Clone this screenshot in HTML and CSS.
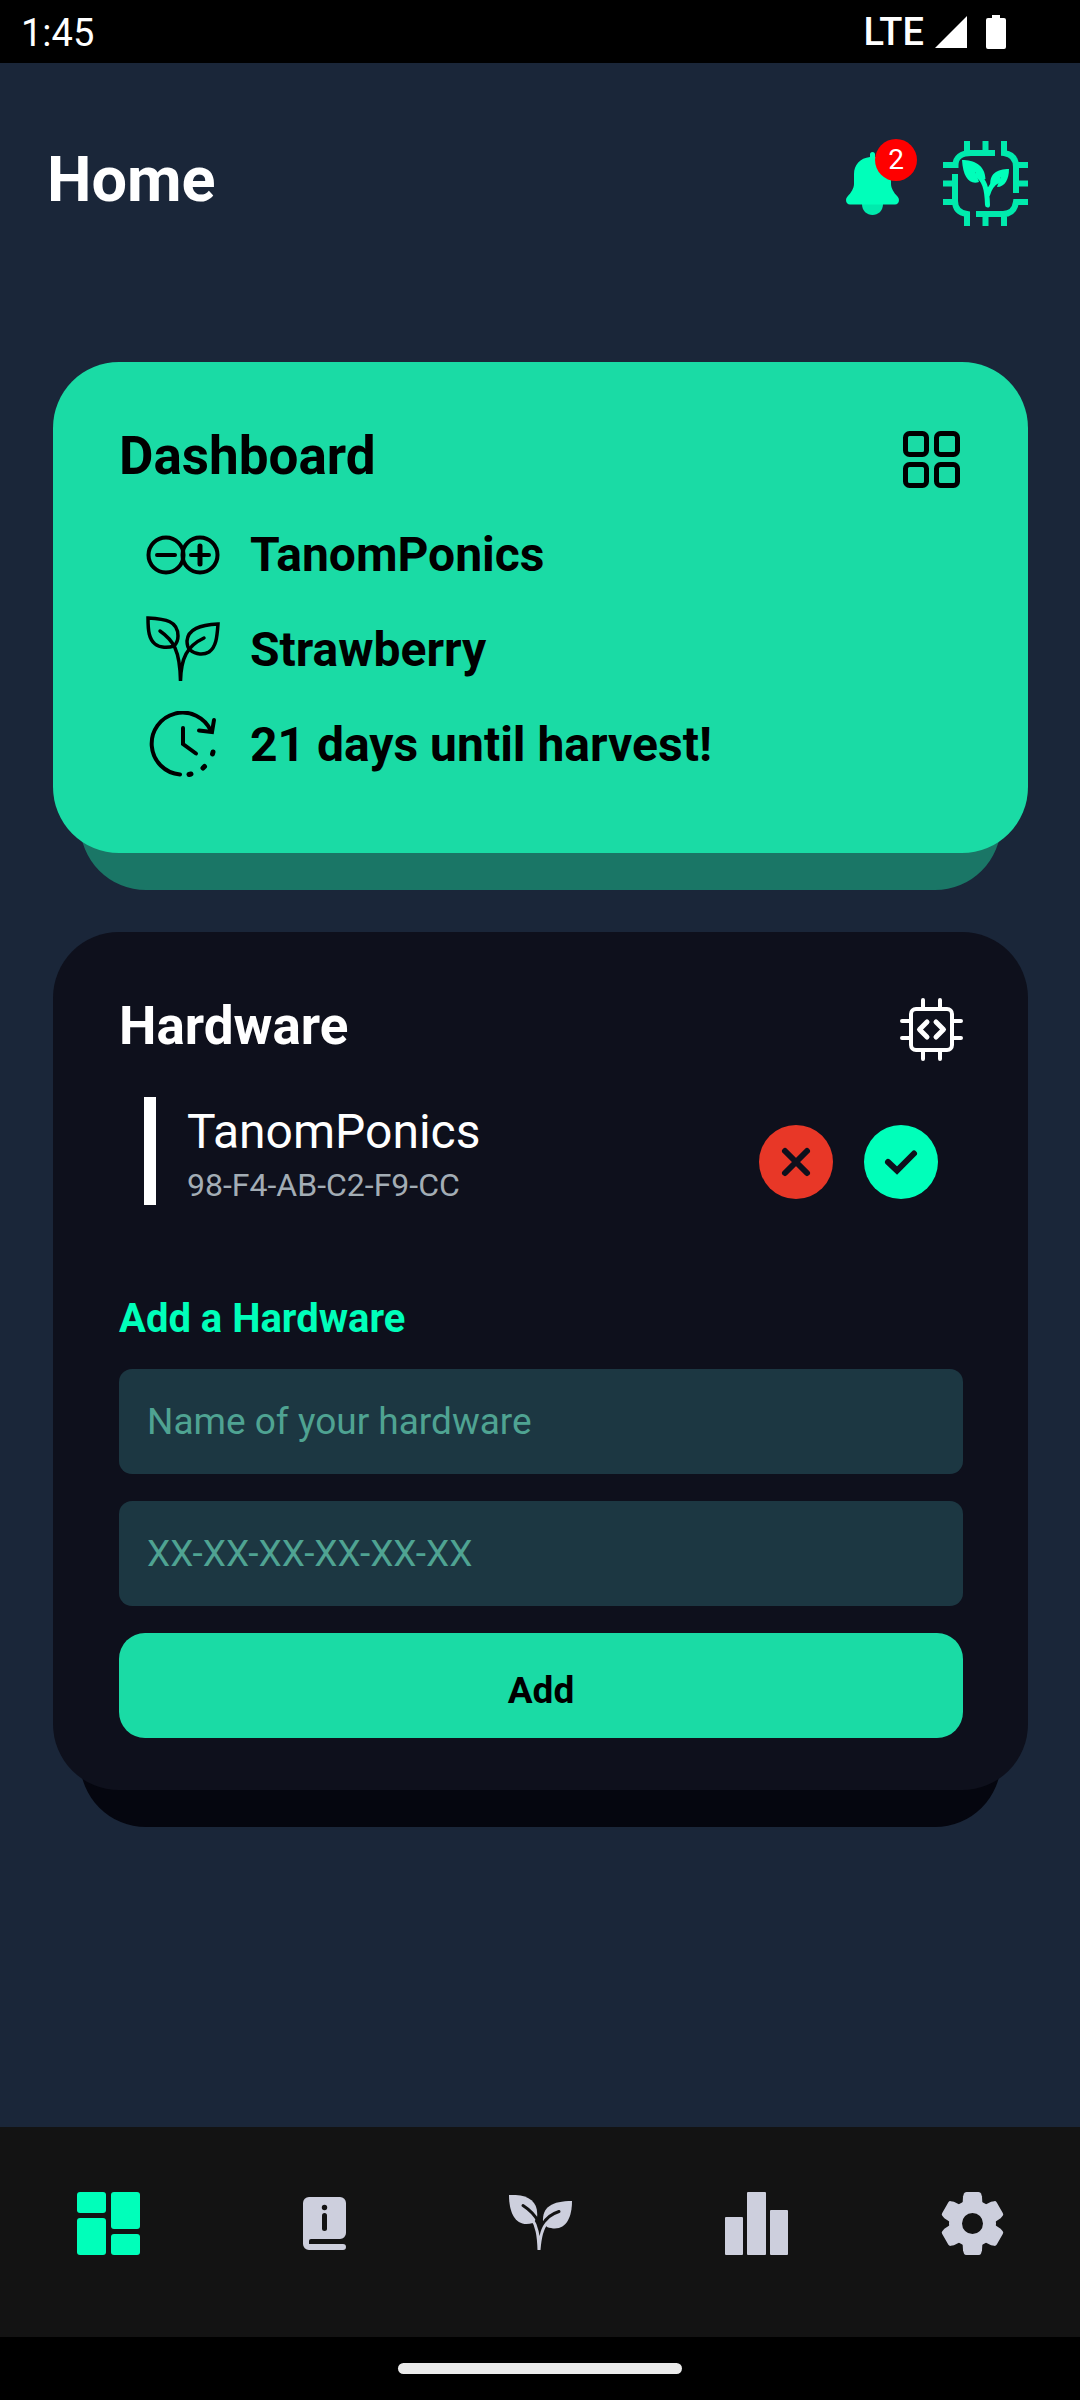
FILE: index.html
```html
<!DOCTYPE html>
<html lang="en">
<head>
<meta charset="utf-8">
<meta name="viewport" content="width=device-width, initial-scale=1">
<title>Home</title>
<link rel="stylesheet" href="styles.css">
</head>
<body>
<div class="status-bar">
  <span class="status-time">1:45</span>
  <div class="status-icons">
    <span class="status-network">LTE</span>
    <svg class="status-signal" width="32" height="32" viewBox="0 0 32 32" aria-hidden="true"><path fill="#fff" d="M32 0V32H0z"/></svg>
    <svg width="20" height="34" viewBox="0 0 20 34" aria-hidden="true"><path fill="#fff" d="M6 0H14V3H18a2 2 0 0 1 2 2V32a2 2 0 0 1-2 2H2a2 2 0 0 1-2-2V5a2 2 0 0 1 2-2H6z"/></svg>
  </div>
</div>

<header class="page-header">
  <h1 class="page-title">Home</h1>
  <div class="header-actions">
    <button class="icon-button bell" type="button" aria-label="Notifications">
      <svg width="53" height="63" viewBox="0 0 53 63" aria-hidden="true">
        <path fill="#00eaad" d="M16 52H37C37 59 32 63 26.500 63S16 59 16 52z"/>
        <path fill="#00ffba" d="M24 5V2.500a2.500 2.500 0 0 1 5 0V5C39 6 45 13 45 22V32C45 36 48 41 51.500 44.500C54.500 48 52.500 52.500 49 52.500H4C.500 52.500-1.500 48 1.500 44.500C5 41 8 36 8 32V22C8 13 14 6 24 5z"/>
      </svg>
      <span class="badge">2</span>
    </button>
    <svg width="85" height="85" viewBox="0 0 85 85" aria-hidden="true">
      <g fill="none" stroke="#00eaad" stroke-width="6">
        <path d="M52 12H28C18 12 12.500 17 12.500 24H0M24 0V13M42.500 0V12"/>
        <path d="M61 0V12C69 13 73 18 73 26V52M85 24H73M85 42.500H73"/>
        <path d="M85 61H73C72 68 68 73 60 73H33M61 72V85M42.500 73V85"/>
        <path d="M24 85V73C17 72 12 68 12 60V33M0 61H12M0 42.500H12"/>
      </g>
      <g fill="#00ffba">
        <path d="M19 19C31 19 42 24 42.500 38L39 39C37 35 34 32 32 31.500C33 34 35 37 36 41C27 44 20 37 19 19z"/>
        <path d="M66 28C54 28 46 33 47.500 45L51 43C53 39 56 37 58 36.500C57 39 55 42 54 46C62 46 66 38 66 28z"/>
      </g>
      <path d="M34 34C41 39 44 46 44.500 64M56 39C50 42 46 48 44.500 54" fill="none" stroke="#00ffba" stroke-width="5" stroke-linecap="round"/>
    </svg>
  </div>
</header>

<main class="cards">
  <section class="card card-dashboard">
    <div class="card-header">
      <h2 class="card-title">Dashboard</h2>
      <svg width="63" height="63" viewBox="-3 -3 63 63" fill="none" stroke="#000" stroke-width="5" aria-hidden="true">
        <rect x="2.500" y="2.500" width="21" height="21" rx="4"/><rect x="33.500" y="2.500" width="21" height="21" rx="4"/>
        <rect x="2.500" y="33.500" width="21" height="21" rx="4"/><rect x="33.500" y="33.500" width="21" height="21" rx="4"/>
      </svg>
    </div>
    <ul class="facts">
      <li class="fact">
        <svg width="74" height="40" viewBox="0 0 74 40" fill="none" stroke="#000" stroke-width="4" aria-hidden="true">
          <circle cx="20" cy="20" r="17.500"/><circle cx="54" cy="20" r="17.500"/>
          <path stroke-linecap="round" d="M11 20H29M45 20H63"/><path stroke-width="5" stroke-linecap="round" d="M54 11V29"/>
        </svg>
        TanomPonics
      </li>
      <li class="fact">
        <svg width="74" height="67" viewBox="0 0 74 67" fill="none" stroke="#000" stroke-width="3.500" stroke-linecap="round" aria-hidden="true">
          <path d="M2 2C20 3 32 5 32 20C32 25 30 28 28 30C22 32 14 32 9 28C3 23 2 15 2 2z"/>
          <path d="M72 8C54 9 42 13 41 25C41 29 42 32 44 34C50 39 58 39 63 36C70 31 71 22 72 8z"/>
          <path d="M14 15C27 24 34 34 34.500 65C35 42 41 30 58 22"/>
        </svg>
        Strawberry
      </li>
      <li class="fact">
        <svg width="74" height="67" viewBox="-4 0 74 67" fill="none" stroke="#000" stroke-width="4" stroke-linecap="round" aria-hidden="true">
          <path d="M30 63.500A31 31 0 1 1 61 20"/>
          <path d="M49 19.500L62 21L64 9"/>
          <path d="M33 17V33L46 42.500"/>
          <path stroke-width="5" d="M39 63.500L41 63M53 57L54.500 55.500M62.500 43L63 41"/>
        </svg>
        21 days until harvest!
      </li>
    </ul>
  </section>

  <section class="card card-hardware">
    <div class="card-header">
      <h2 class="card-title">Hardware</h2>
      <svg width="63" height="63" viewBox="0 0 63 63" fill="none" stroke="#fff" stroke-width="4" stroke-linecap="round" stroke-linejoin="round" aria-hidden="true">
        <rect x="11" y="11" width="41" height="41" rx="5"/>
        <path d="M23 2V10M40 2V10M23 53V61M40 53V61M2 23H10M2 40H10M53 23H61M53 40H61"/>
        <path stroke-width="5" d="M27 24L19.500 31.500L27 39M36 24L43.500 31.500L36 39"/>
      </svg>
    </div>
    <div class="device">
      <div class="device-text">
        <p class="device-name">TanomPonics</p>
        <p class="device-mac">98-F4-AB-C2-F9-CC</p>
      </div>
      <div class="device-actions">
        <button class="icon-button" type="button" aria-label="Remove">
          <svg width="74" height="74" viewBox="0 0 74 74" aria-hidden="true"><circle cx="37" cy="37" r="37" fill="#e83727"/><path d="M26 26L48 48M48 26L26 48" stroke="#0e101c" stroke-width="6" stroke-linecap="round"/></svg>
        </button>
        <button class="icon-button" type="button" aria-label="Select">
          <svg width="74" height="74" viewBox="0 0 74 74" aria-hidden="true"><circle cx="37" cy="37" r="37" fill="#00ffba"/><path d="M24 37L33 45.500L50 28.500" fill="none" stroke="#0e101c" stroke-width="6" stroke-linecap="round"/></svg>
        </button>
      </div>
    </div>
    <form class="add-form">
      <h3 class="form-title">Add a Hardware</h3>
      <input class="field" type="text" aria-label="Name of your hardware" placeholder="Name of your hardware">
      <input class="field" type="text" aria-label="MAC address" placeholder="XX-XX-XX-XX-XX-XX">
      <button class="add-button" type="button">Add</button>
    </form>
  </section>
</main>

<nav class="tab-bar" aria-label="Main">
  <a class="tab tab-active" href="#home" aria-label="Home">
    <svg width="63" height="63" viewBox="0 0 63 63" fill="currentColor" aria-hidden="true"><rect width="29" height="21" rx="3"/><rect y="26" width="29" height="37" rx="3"/><rect x="34" width="29" height="37" rx="3"/><rect x="34" y="42" width="29" height="21" rx="3"/></svg>
  </a>
  <a class="tab" href="#guide" aria-label="Guide">
    <svg width="43" height="53" viewBox="0 0 43 53" aria-hidden="true"><path fill="currentColor" d="M6 0H37a6 6 0 0 1 6 6V36a6 6 0 0 1-6 6H8a2 2 0 0 0-2 2V47H40a3 3 0 0 1 0 6H6a6 6 0 0 1-6-6V6a6 6 0 0 1 6-6z"/><circle cx="21.500" cy="10.500" r="2.700" fill="#131313"/><path d="M21.500 18.500V31.500" stroke="#131313" stroke-width="5" stroke-linecap="round"/></svg>
  </a>
  <a class="tab" href="#plants" aria-label="Plants">
    <svg width="63" height="57" viewBox="0 0 63 57" aria-hidden="true">
      <g fill="currentColor"><path d="M0 0C19-1 30 6 28 23L24 28C8 33 0 20 0 0z"/><path d="M63 6C43 6 33 12 34 27L38 32C55 38 63 25 63 6z"/></g>
      <path d="M14 10.500Q24 17 29 26M50 16.500Q39 20 34 29" fill="none" stroke="#131313" stroke-width="3" stroke-linecap="round"/>
      <path d="M22.500 23C28 31 29.500 40 30 55C31 42 33 33 38 28" fill="none" stroke="currentColor" stroke-width="3" stroke-linecap="round"/>
    </svg>
  </a>
  <a class="tab" href="#stats" aria-label="Statistics">
    <svg width="63" height="63" viewBox="0 0 63 63" fill="currentColor" aria-hidden="true"><rect y="25" width="18" height="38" rx="1"/><rect x="22" width="19" height="63" rx="1"/><rect x="45" y="18" width="18" height="45" rx="1"/></svg>
  </a>
  <a class="tab" href="#settings" aria-label="Settings">
    <svg width="63" height="63" viewBox="-31.500 -31.500 63 63" aria-hidden="true">
      <circle r="17" fill="none" stroke="currentColor" stroke-width="13"/>
      <g fill="currentColor">
        <path id="tooth" d="M-10-18L-9.500-27L-8.500-30Q-8-31.500-6-31.500H6Q8-31.500 8.500-30L9.500-27L10-18z"/>
        <use href="#tooth" transform="rotate(60)"/><use href="#tooth" transform="rotate(120)"/><use href="#tooth" transform="rotate(180)"/><use href="#tooth" transform="rotate(240)"/><use href="#tooth" transform="rotate(300)"/>
      </g>
    </svg>
  </a>
</nav>
<div class="gesture-bar"><span class="gesture-pill"></span></div>
</body>
</html>
```
FILE: styles.css
```css
* {
  box-sizing: border-box;
}

body {
  margin: 0;
  min-height: 100vh;
  display: flex;
  flex-direction: column;
  background: #1a2639;
  color: #fff;
  font-family: Roboto, "Liberation Sans", sans-serif;
}

h1, h2, h3, p, ul {
  margin: 0;
  padding: 0;
}

svg {
  display: block;
  flex: none;
}

/* System status bar */
.status-bar {
  display: flex;
  justify-content: space-between;
  align-items: center;
  height: 63px;
  padding: 0 74px 0 21px;
  background: #000;
  font-size: 38px;
  line-height: 44px;
}

.status-time {
  padding-top: 3px;
}

.status-icons {
  display: flex;
  align-items: center;
}

.status-network {
  font-weight: 500;
}

.status-signal {
  margin: 0 19px 0 11px;
}

/* Page header */
.page-header {
  display: flex;
  justify-content: space-between;
  align-items: flex-start;
  padding: 78px 52px 0 47px;
}

.page-title {
  font-size: 63px;
  line-height: 77px;
  font-weight: 700;
}

.header-actions {
  display: flex;
  align-items: center;
  gap: 44px;
}

.icon-button {
  border: 0;
  padding: 0;
  background: none;
  border-radius: 50%;
  cursor: pointer;
}

.bell {
  position: relative;
  border-radius: 0;
}

.badge {
  position: absolute;
  top: -13px;
  right: -18px;
  width: 42px;
  height: 42px;
  border-radius: 50%;
  background: #f00;
  color: #fff;
  font: 28px/42px Roboto, "Liberation Sans", sans-serif;
  text-align: center;
}

/* Cards */
.cards {
  flex: 1;
  display: flex;
  flex-direction: column;
  gap: 79px;
  padding: 136px 52px 79px 53px;
}

.card {
  position: relative;
  z-index: 0;
  padding: 66px 65px 0 66px;
}

.card::before,
.card::after {
  content: "";
  position: absolute;
  inset: 0;
  z-index: -1;
  border-radius: 66px;
}

.card::before {
  inset: 27px 27px -37px;
}

.card-dashboard {
  padding-bottom: 61px;
  color: #000;
}

.card-dashboard::before {
  background: #1a7666;
}

.card-dashboard::after {
  background: #1adba5;
}

.card-hardware {
  padding-bottom: 52px;
}

.card-hardware::before {
  background: #05060f;
}

.card-hardware::after {
  background: #0e101c;
}

.card-header {
  display: flex;
  justify-content: space-between;
  align-items: flex-start;
}

.card-title {
  font-size: 53px;
  line-height: 57px;
  font-weight: 700;
}

.facts {
  list-style: none;
  margin: 16px 0 0 27px;
}

.fact {
  display: flex;
  align-items: center;
  gap: 30px;
  height: 95px;
  font-size: 48px;
  line-height: 56px;
  font-weight: 700;
}

/* Registered device */
.device {
  display: flex;
  align-items: flex-start;
  justify-content: space-between;
  margin: 36px 25px 0;
}

.device-text {
  border-left: 12px solid #fff;
  padding: 7px 0 0 31px;
  height: 108px;
}

.device-name {
  font-size: 48px;
  line-height: 56px;
}

.device-mac {
  font-size: 32px;
  line-height: 50px;
  color: #a3adb5;
}

.device-actions {
  display: flex;
  gap: 31px;
  padding-top: 28px;
}

/* Add form */
.add-form {
  display: flex;
  flex-direction: column;
  gap: 27px;
  margin-top: 91px;
}

.form-title {
  font-size: 40px;
  line-height: 46px;
  font-weight: 700;
  color: #00ffba;
}

.field {
  width: 100%;
  height: 105px;
  border: 0;
  border-radius: 13px;
  padding: 0 28px;
  background: #1c3742;
  color: #fff;
  font: 37px/44px Roboto, "Liberation Sans", sans-serif;
}

.field::placeholder {
  color: #4fa392;
  opacity: 1;
}

.add-button {
  height: 105px;
  border: 0;
  border-radius: 26px;
  padding: 11px 0 0;
  background: #1adba5;
  color: #000;
  font: 700 37px/44px Roboto, "Liberation Sans", sans-serif;
  cursor: pointer;
}

/* Bottom navigation */
.tab-bar {
  display: flex;
  height: 210px;
  padding-bottom: 17px;
  background: #131313;
}

.tab {
  flex: 1;
  display: flex;
  align-items: center;
  justify-content: center;
  color: #cdcfdd;
}

.tab-active {
  color: #00ffba;
}

.gesture-bar {
  display: flex;
  align-items: center;
  justify-content: center;
  height: 63px;
  background: #000;
}

.gesture-pill {
  width: 284px;
  height: 11px;
  border-radius: 6px;
  background: #ebebeb;
}
```
